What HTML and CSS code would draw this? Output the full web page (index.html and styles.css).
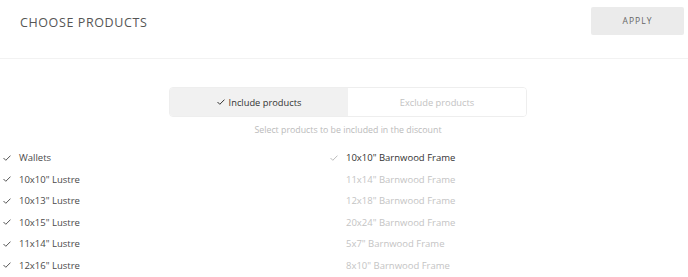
FILE: index.html
```html
<!DOCTYPE html>
<html lang="en">
<head>
  <meta charset="UTF-8" />
  <title>Choose products</title>
  <link rel="stylesheet" href="styles.css">
</head>
<body>
  <header class="bar">
    <h1 class="title">Choose products</h1>
    <button class="apply">Apply</button>
  </header>

  <div class="mode">
    <div class="toggle">
      <button class="tab active">
        <svg class="check" width="8" height="6" viewBox="0 0 8 6"><polyline points="0.5,3 2.8,5.3 7.5,0.6"/></svg>
        Include products
      </button>
      <button class="tab">Exclude products</button>
    </div>
    <p class="hint">Select products to be included in the discount</p>
  </div>

  <div class="lists">
    <ul class="list">
      <li class="item on"><svg class="check" width="8" height="6" viewBox="0 0 8 6"><polyline points="0.5,3 2.8,5.3 7.5,0.6"/></svg>Wallets</li>
      <li class="item on"><svg class="check" width="8" height="6" viewBox="0 0 8 6"><polyline points="0.5,3 2.8,5.3 7.5,0.6"/></svg>10x10" Lustre</li>
      <li class="item on"><svg class="check" width="8" height="6" viewBox="0 0 8 6"><polyline points="0.5,3 2.8,5.3 7.5,0.6"/></svg>10x13" Lustre</li>
      <li class="item on"><svg class="check" width="8" height="6" viewBox="0 0 8 6"><polyline points="0.5,3 2.8,5.3 7.5,0.6"/></svg>10x15" Lustre</li>
      <li class="item on"><svg class="check" width="8" height="6" viewBox="0 0 8 6"><polyline points="0.5,3 2.8,5.3 7.5,0.6"/></svg>11x14" Lustre</li>
      <li class="item on"><svg class="check" width="8" height="6" viewBox="0 0 8 6"><polyline points="0.5,3 2.8,5.3 7.5,0.6"/></svg>12x16" Lustre</li>
    </ul>
    <ul class="list light">
      <li class="item on"><svg class="check" width="8" height="6" viewBox="0 0 8 6"><polyline points="0.5,3 2.8,5.3 7.5,0.6"/></svg>10x10" Barnwood Frame</li>
      <li class="item"><span class="check"></span>11x14" Barnwood Frame</li>
      <li class="item"><span class="check"></span>12x18" Barnwood Frame</li>
      <li class="item"><span class="check"></span>20x24" Barnwood Frame</li>
      <li class="item"><span class="check"></span>5x7" Barnwood Frame</li>
      <li class="item"><span class="check"></span>8x10" Barnwood Frame</li>
    </ul>
  </div>
</body>
</html>
```

FILE: styles.css
```css
* { box-sizing: border-box; }

body {
  margin: 0;
  font-family: "Open Sans", "Liberation Sans", sans-serif;
  color: #333;
  background: #fff;
}

.bar {
  display: flex;
  align-items: center;
  justify-content: space-between;
  height: 59px;
  padding: 0 4px 17px 20px;
  border-bottom: 1px solid #f2f2f2;
}

.title {
  margin: 3px 0 0;
  font-size: 12.5px;
  font-weight: 400;
  letter-spacing: 0.6px;
  text-transform: uppercase;
  color: #555;
}

.apply {
  width: 93px;
  height: 28px;
  border: none;
  border-radius: 2px;
  background: #ebebeb;
  color: #666;
  font-family: inherit;
  font-size: 8.5px;
  letter-spacing: 1px;
  text-transform: uppercase;
}

.mode {
  display: flex;
  flex-direction: column;
  align-items: center;
  padding-top: 28px;
}

.toggle {
  display: flex;
  width: 358px;
  height: 30px;
  margin-left: 8px;
  border: 1px solid #eee;
  border-radius: 4px;
  overflow: hidden;
}

.tab {
  flex: 1;
  display: flex;
  align-items: center;
  justify-content: center;
  gap: 4px;
  border: none;
  background: #fff;
  font-family: inherit;
  font-size: 9.3px;
  color: #c2c2c2;
}

.tab.active {
  background: #f1f1f1;
  color: #333;
}

.tab .check { stroke: #333; }

.hint {
  margin: 7px 0 0 8px;
  font-size: 8.8px;
  color: #bbb;
}

.lists {
  display: grid;
  grid-template-columns: 327px 1fr;
  padding: 11px 0 0 3px;
}

.list {
  list-style: none;
  margin: 0;
  padding: 0;
}

.item {
  display: flex;
  align-items: center;
  height: 21.5px;
  font-size: 9.5px;
  color: #4a4a4a;
}

.check {
  flex: none;
  width: 8px;
  fill: none;
  stroke: #555;
  stroke-width: 1;
}

.item .check { margin-right: 8px; }

.light .item { color: #c4c4c4; }
.light .item.on { color: #333; }
.light .check { stroke: #bbb; }
```
